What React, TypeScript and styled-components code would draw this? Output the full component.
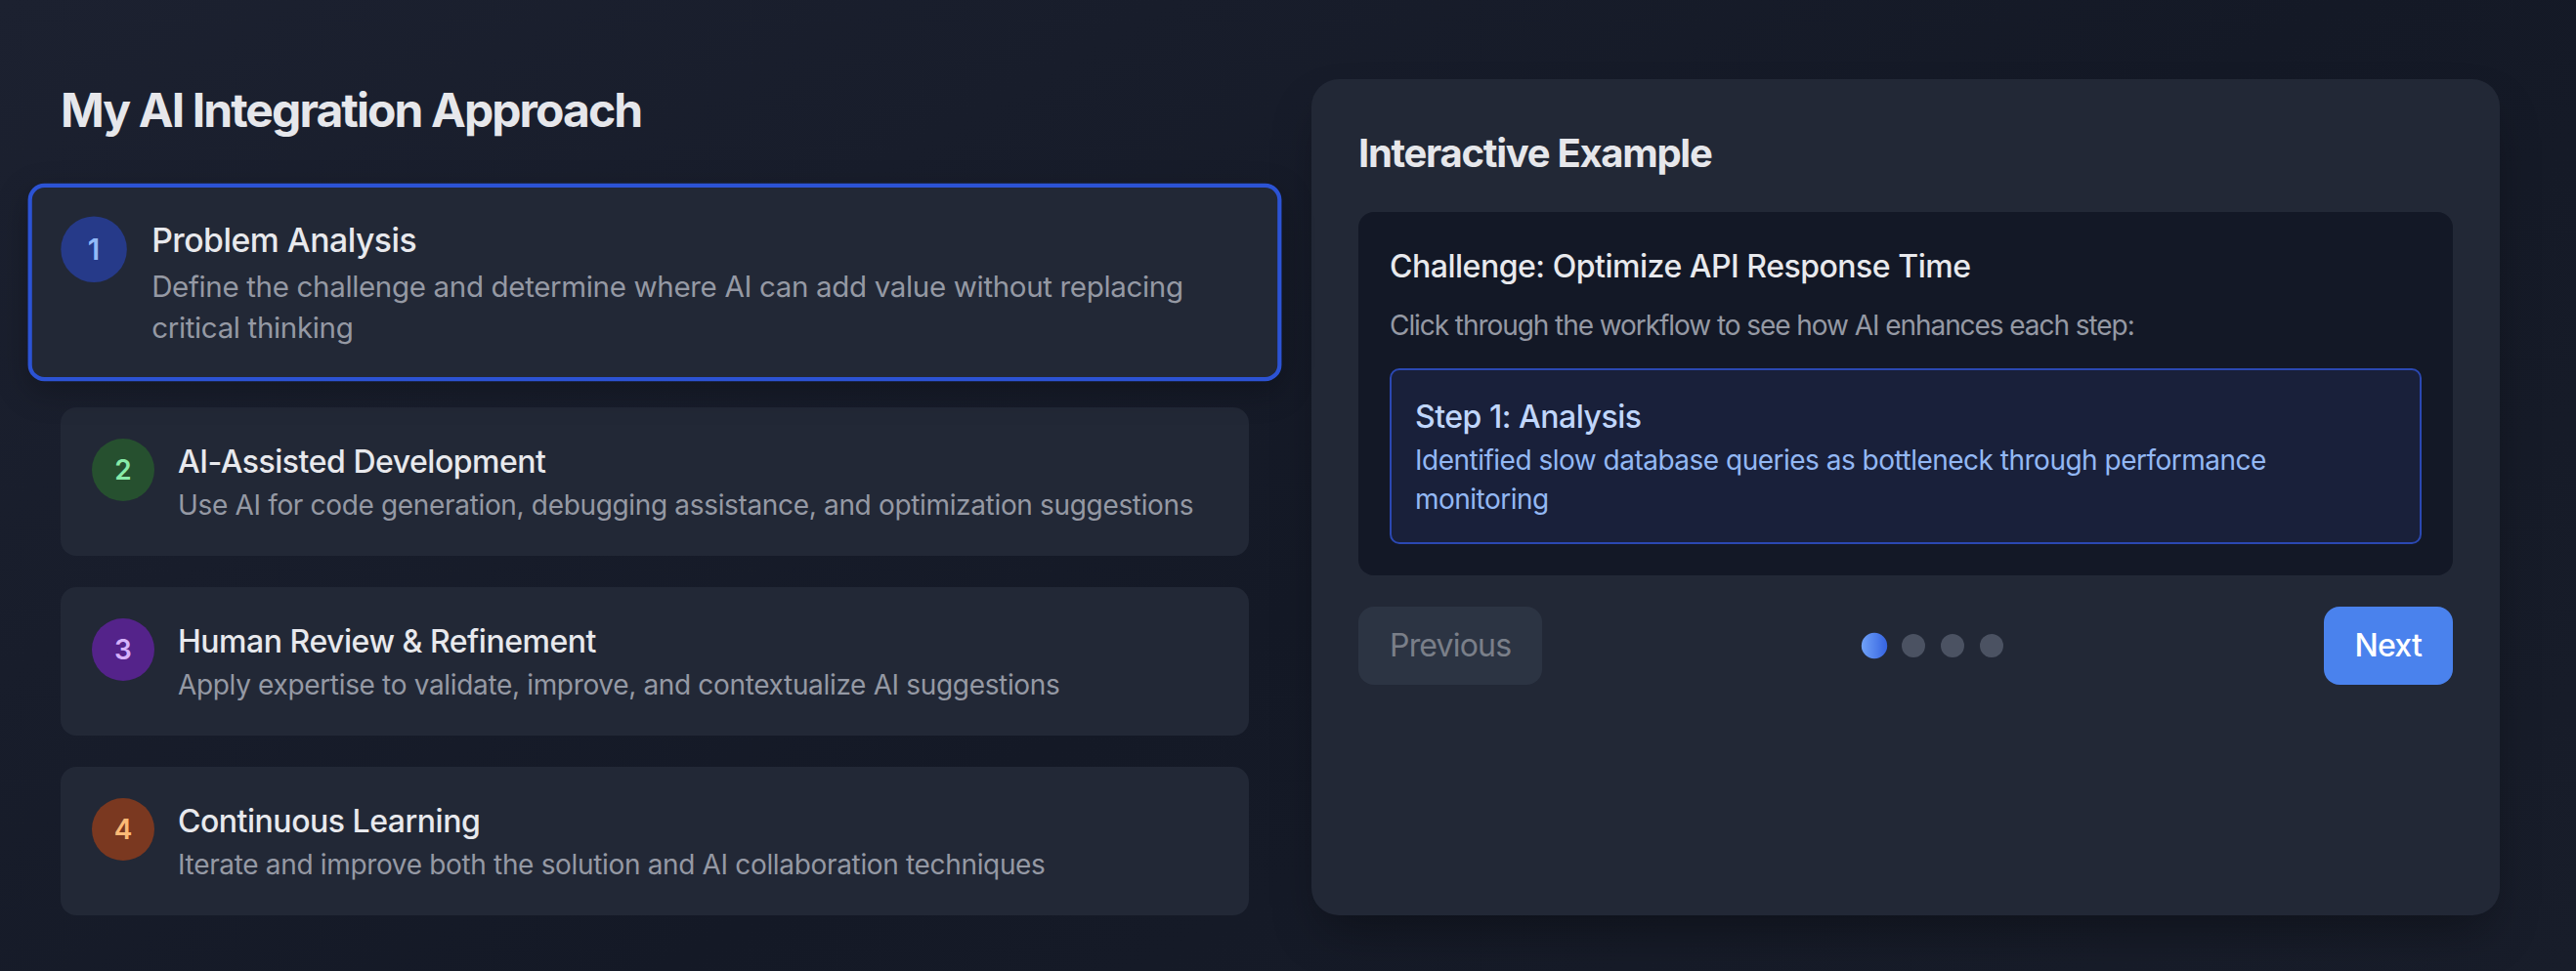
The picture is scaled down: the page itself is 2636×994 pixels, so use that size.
import React, { FC, useState } from "react";
import styled, { createGlobalStyle, css } from "styled-components";

type Tone = "blue" | "green" | "purple" | "orange";

interface Step {
    title: string;
    text: string;
    tone: Tone;
}

const steps: Step[] = [
    {
        title: "Problem Analysis",
        text: "Define the challenge and determine where AI can add value without replacing critical thinking",
        tone: "blue",
    },
    {
        title: "AI-Assisted Development",
        text: "Use AI for code generation, debugging assistance, and optimization suggestions",
        tone: "green",
    },
    {
        title: "Human Review & Refinement",
        text: "Apply expertise to validate, improve, and contextualize AI suggestions",
        tone: "purple",
    },
    {
        title: "Continuous Learning",
        text: "Iterate and improve both the solution and AI collaboration techniques",
        tone: "orange",
    },
];

const examples = [
    {
        title: "Step 1: Analysis",
        text: "Identified slow database queries as bottleneck through performance monitoring",
    },
    {
        title: "Step 2: AI Assistance",
        text: "Used AI to suggest query indexes and caching strategies",
    },
    {
        title: "Step 3: Review",
        text: "Validated suggestions against the data model and load patterns",
    },
    {
        title: "Step 4: Learning",
        text: "Documented the results to improve future prompts and reviews",
    },
];

const tones: Record<Tone, { bg: string; fg: string }> = {
    blue: { bg: "#263a89", fg: "#93b9f7" },
    green: { bg: "#26502f", fg: "#88eca9" },
    purple: { bg: "#54238a", fg: "#d6b2fb" },
    orange: { bg: "#7a3820", fg: "#fbba76" },
};

const GlobalStyle = createGlobalStyle`
    html, body {
        margin: 0;
        padding: 0;
        background: #151a26;
    }
    * {
        box-sizing: border-box;
    }
`;

const Page = styled.div`
    min-height: 994px;
    padding: 81px 78px 57px 62px;
    font-family: Inter, "Noto Sans", sans-serif;
    background: linear-gradient(150deg, #1c2130 0%, #141926 55%, #181d2a 100%);
`;

const Grid = styled.div`
    display: grid;
    grid-template-columns: 1fr 1fr;
    gap: 64px;
`;

const Column = styled.div`
    display: flex;
    flex-direction: column;
`;

const Heading = styled.h2`
    margin: 0 0 48px;
    font-size: 48px;
    line-height: 64px;
    font-weight: 700;
    letter-spacing: -0.04em;
    color: #e6e7eb;
`;

const StepList = styled.div`
    display: flex;
    flex-direction: column;
    gap: 32px;
`;

const StepCard = styled.div<{ $active: boolean }>`
    display: flex;
    align-items: flex-start;
    gap: 24px;
    padding: 28px;
    border: 4px solid transparent;
    border-radius: 16px;
    background: #222836;
    cursor: pointer;
    transition: transform 0.3s ease;
    ${(p) =>
        p.$active &&
        css`
            border-color: #2c53d4;
            transform: scale(1.055);
            box-shadow: 0 10px 30px rgba(0, 0, 0, 0.25);
        `}
`;

const Circle = styled.div<{ $tone: Tone }>`
    flex-shrink: 0;
    width: 64px;
    height: 64px;
    border-radius: 50%;
    display: flex;
    align-items: center;
    justify-content: center;
    font-size: 28px;
    font-weight: 600;
    background: ${(p) => tones[p.$tone].bg};
    color: ${(p) => tones[p.$tone].fg};
`;

const StepBody = styled.div`
    display: flex;
    flex-direction: column;
`;

const StepTitle = styled.div`
    font-size: 32px;
    line-height: 48px;
    font-weight: 500;
    letter-spacing: -0.015em;
    color: #e8e9ed;
`;

const StepText = styled.div`
    font-size: 28px;
    line-height: 40px;
    letter-spacing: -0.012em;
    color: #9599a4;
`;

const Panel = styled.div`
    padding: 48px;
    border-radius: 28px;
    background: #222836;
    box-shadow: 0 25px 50px -12px rgba(0, 0, 0, 0.35);
`;

const PanelTitle = styled.h3`
    margin: 0 0 32px;
    font-size: 40px;
    line-height: 56px;
    font-weight: 700;
    letter-spacing: -0.032em;
    color: #e6e7eb;
`;

const ChallengeBox = styled.div`
    padding: 32px;
    border-radius: 16px;
    background: #131826;
`;

const ChallengeTitle = styled.div`
    margin-bottom: 16px;
    font-size: 32px;
    line-height: 48px;
    font-weight: 500;
    letter-spacing: -0.015em;
    color: #e8e9ed;
`;

const ChallengeText = styled.div`
    margin-bottom: 24px;
    font-size: 28px;
    line-height: 40px;
    letter-spacing: -0.038em;
    color: #9599a4;
`;

const ExampleBox = styled.div`
    padding: 24px;
    border: 2px solid #2b48b2;
    border-radius: 10px;
    background: #19203a;
`;

const ExampleTitle = styled.div`
    font-size: 32px;
    line-height: 48px;
    font-weight: 500;
    letter-spacing: -0.015em;
    color: #c0d6fb;
`;

const ExampleText = styled.div`
    font-size: 28px;
    line-height: 40px;
    letter-spacing: -0.018em;
    color: #93b8f4;
`;

const Controls = styled.div`
    margin-top: 32px;
    display: flex;
    align-items: center;
    justify-content: space-between;
`;

const NavButton = styled.button<{ $primary?: boolean }>`
    padding: 16px 32px;
    border: none;
    border-radius: 16px;
    font-family: inherit;
    font-size: 32px;
    line-height: 48px;
    font-weight: ${(p) => (p.$primary ? 500 : 400)};
    letter-spacing: -0.025em;
    cursor: pointer;
    background: ${(p) => (p.$primary ? "#4a82ed" : "#374151")};
    color: ${(p) => (p.$primary ? "#ffffff" : "#d1d5db")};
    &:disabled {
        opacity: 0.5;
        cursor: default;
    }
`;

const Dots = styled.div`
    display: flex;
    gap: 16px;
`;

const Dot = styled.div<{ $active: boolean }>`
    width: 24px;
    height: 24px;
    border-radius: 50%;
    background: ${(p) =>
        p.$active ? "linear-gradient(90deg, #70a2f8, #3563e0)" : "#4b5262"};
    transform: ${(p) => (p.$active ? "scale(1.1)" : "none")};
`;

const App: FC = () => {
    const [current, setCurrent] = useState(0);
    const example = examples[current];

    return (
        <Page>
            <GlobalStyle />
            <Grid>
                <Column>
                    <Heading>My AI Integration Approach</Heading>
                    <StepList>
                        {steps.map((step, i) => (
                            <StepCard
                                key={step.title}
                                $active={i === current}
                                onClick={() => setCurrent(i)}
                            >
                                <Circle $tone={step.tone}>{i + 1}</Circle>
                                <StepBody>
                                    <StepTitle>{step.title}</StepTitle>
                                    <StepText>{step.text}</StepText>
                                </StepBody>
                            </StepCard>
                        ))}
                    </StepList>
                </Column>
                <Panel>
                    <PanelTitle>Interactive Example</PanelTitle>
                    <ChallengeBox>
                        <ChallengeTitle>Challenge: Optimize API Response Time</ChallengeTitle>
                        <ChallengeText>
                            Click through the workflow to see how AI enhances each step:
                        </ChallengeText>
                        <ExampleBox>
                            <ExampleTitle>{example.title}</ExampleTitle>
                            <ExampleText>{example.text}</ExampleText>
                        </ExampleBox>
                    </ChallengeBox>
                    <Controls>
                        <NavButton
                            disabled={current === 0}
                            onClick={() => setCurrent((c) => Math.max(0, c - 1))}
                        >
                            Previous
                        </NavButton>
                        <Dots>
                            {examples.map((_, i) => (
                                <Dot key={i} $active={i === current} />
                            ))}
                        </Dots>
                        <NavButton
                            $primary
                            onClick={() => setCurrent((c) => Math.min(examples.length - 1, c + 1))}
                        >
                            Next
                        </NavButton>
                    </Controls>
                </Panel>
            </Grid>
        </Page>
    );
};

export default App;
